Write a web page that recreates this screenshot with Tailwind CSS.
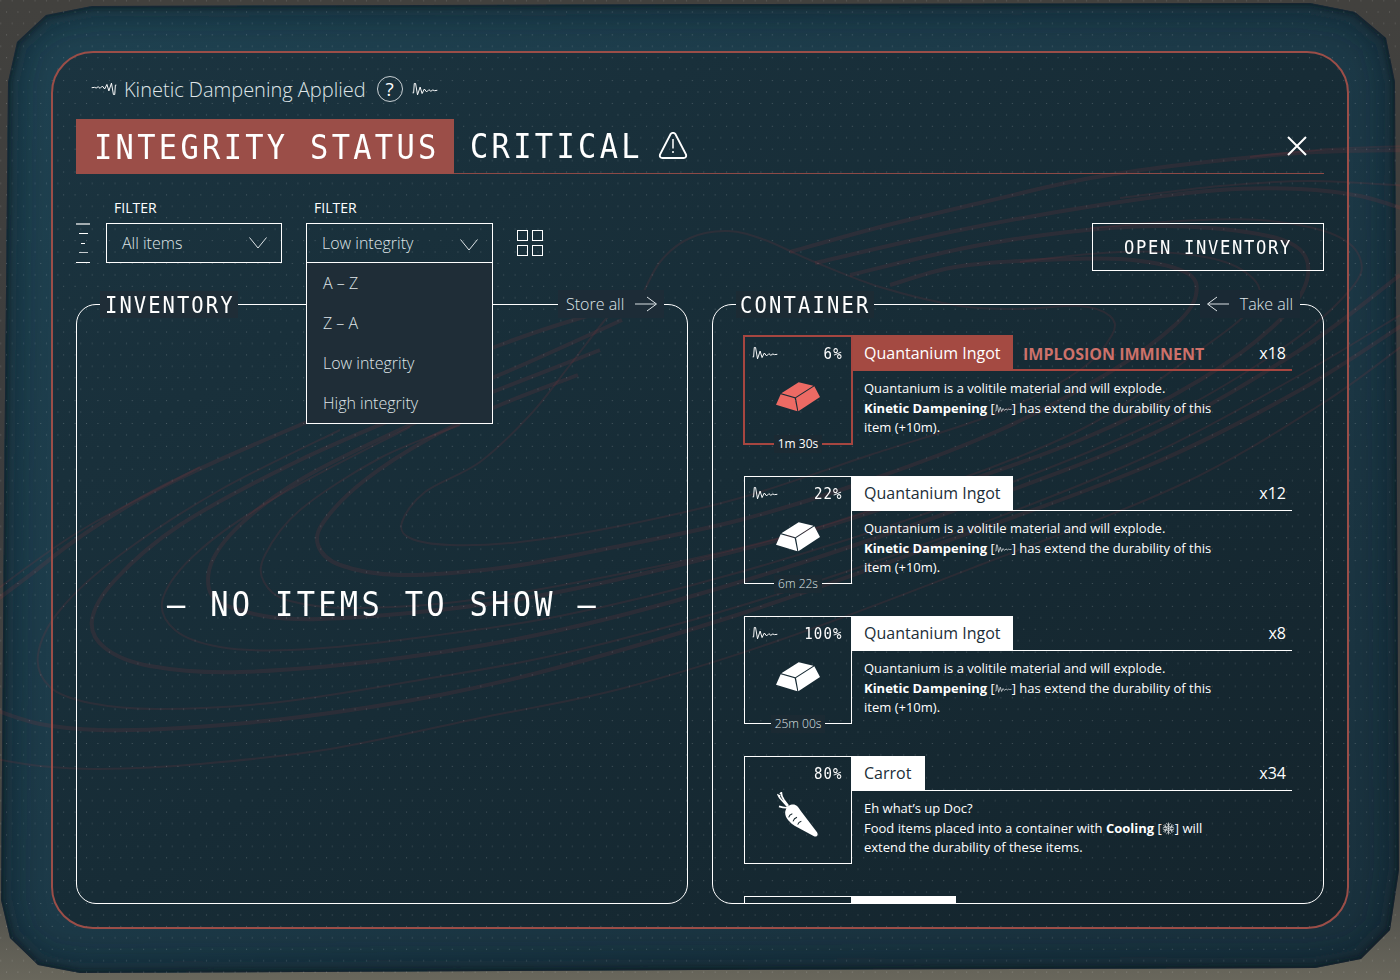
<!DOCTYPE html>
<html lang="en">
<head>
<meta charset="utf-8">
<title>Inventory</title>
<script src="https://cdn.jsdelivr.net/npm/@tailwindcss/browser@4"></script>
</head>
<body class="relative w-[1400px] h-[980px] overflow-hidden bg-[#3f3f3c] text-white font-['Open_Sans','Noto_Sans',sans-serif]">

<!-- icon library -->
<svg class="hidden">
  <symbol id="wave" viewBox="66 62 80 42"><path d="M68 95L71 95L73 66L77 66L83 101L91 77L97 97L104 83L111 92L118 85L124 90L130 86L135 88L144 87" fill="none" stroke="currentColor" stroke-width="3" stroke-linejoin="round"/></symbol>
  <symbol id="ingot" viewBox="138 170 134 90"><path d="M154 204L206 171L250 181L196 216ZM152 207L194 219L202 258L138 238ZM198 218L253 183L270 215L205 258Z" fill="currentColor"/></symbol>
  <symbol id="carrot" viewBox="140 155 125 137"><path d="M167 207C170 197 184 190 195 194C203 197 206 204 212 213L260 276C265 284 259 291 251 288L194 257C178 247 161 230 165 212Z" fill="currentColor"/><path d="M172 199L154 179Q146 171 144 165L150 168M174 196L161 179Q153 168 153 157L149 161M172 202Q160 203 146 198" fill="none" stroke="currentColor" stroke-width="5"/><path d="M175 231q2-8 11-11M188 243q3-9 12-12M202 253q3-8 11-10" fill="none" stroke="#16282f" stroke-width="3"/></symbol>
  <symbol id="snow" viewBox="0 0 24 24"><path d="M12 1v22M2.500 6.500l19 11M21.500 6.500l-19 11M8 2l4 4 4-4M8 22l4-4 4 4M1.500 11l5.500-1.500-1.500-5.500M22.500 11L17 9.500 18.500 4M1.500 13L7 14.500 5.500 20M22.500 13L17 14.500l1.500 5.500M12 7l4.300 2.500v5L12 17l-4.300-2.500v-5z" fill="none" stroke="currentColor" stroke-width="1.200"/></symbol>
  <symbol id="arrow" viewBox="0 0 23 16"><path d="M0 8H21" stroke="currentColor" stroke-width="1.500" opacity=".65"/><path d="M12 1L21.500 8L12 15" fill="none" stroke="currentColor" stroke-width="1"/></symbol>
  <symbol id="chev" viewBox="0 0 18 12"><path d="M.5 .5L9 11L17.500 .5" fill="none" stroke="currentColor" stroke-width="1"/></symbol>
</svg>

<!-- backdrop -->
<svg class="absolute inset-0" width="1400" height="980" viewBox="0 0 1400 980">
  <defs>
    <linearGradient id="metal" x1="0" y1="0" x2="0" y2="1"><stop offset="0" stop-color="#42413e"/><stop offset=".5" stop-color="#3c3d3e"/><stop offset=".9" stop-color="#4b4b47"/><stop offset="1" stop-color="#69675c"/></linearGradient>
    <linearGradient id="screen" x1="0" y1="0" x2="1" y2="1"><stop offset="0" stop-color="#1f4251"/><stop offset=".5" stop-color="#1c3947"/><stop offset="1" stop-color="#19303c"/></linearGradient>
    <linearGradient id="inner" x1="0" y1="0" x2="1" y2="1"><stop offset="0" stop-color="#1b3440"/><stop offset=".5" stop-color="#172c36"/><stop offset="1" stop-color="#14242c"/></linearGradient>
    <pattern id="dots" width="11.430" height="22.860" patternUnits="userSpaceOnUse" x="6" y="11.500"><rect width="1" height="1" fill="#fff" opacity=".2"/><rect x="5.700" y="11.430" width="1" height="1" fill="#fff" opacity=".2"/></pattern>
    <filter id="soft" x="-5%" y="-5%" width="110%" height="110%"><feGaussianBlur stdDeviation="14"/></filter>
    <filter id="edge" x="-5%" y="-5%" width="110%" height="110%"><feGaussianBlur stdDeviation="2.500"/></filter>
    <path id="shape" d="M8 82L17 42L46 15L92 6L700 4L1310 3L1355 12L1386 38L1395 82L1397 500L1399 870L1390 930L1361 959L1315 968L700 970L80 973L38 965L10 938L1 900L4 500Z"/>
    <clipPath id="cut"><use href="#shape"/></clipPath>
  </defs>
  <rect width="1400" height="980" fill="url(#metal)"/>
  <use href="#shape" fill="url(#screen)"/>
  <g clip-path="url(#cut)"><use href="#shape" fill="none" stroke="#101f28" stroke-width="24" opacity=".5" filter="url(#soft)"/><use href="#shape" fill="none" stroke="#0c171d" stroke-width="4" opacity=".7" filter="url(#edge)"/></g>
  <rect x="52" y="52" width="1296" height="876" rx="41" fill="url(#inner)"/>
  <g id="rings" fill="none" stroke="#a83c42" stroke-opacity=".14"></g>
  <rect width="1400" height="980" fill="url(#dots)"/>
</svg>

<main class="relative m-[51px] w-[1298px] h-[878px] border-2 border-[#9b4e48] rounded-[42px] px-[23px] pt-[23px] flex flex-col">
  <div class="flex items-center h-[26px] pl-[15px] text-[20px] font-light">
    <svg class="w-[26px] h-[16px] rotate-180"><use href="#wave"/></svg>
    <span class="relative top-px ml-[7px] whitespace-nowrap text-[#dfe5e8]">Kinetic Dampening Applied</span>
    <span class="ml-[11px] size-[26px] rounded-full border border-[#c9d0d4] flex items-center justify-center text-[19px] font-normal">?</span>
    <svg class="ml-[9px] w-[26px] h-[16px]"><use href="#wave"/></svg>
  </div>

  <header class="mt-[17px] h-[55px] flex items-center border-b border-[#8d4a46] font-['DejaVu_Sans_Mono',monospace] text-[34.500px] tracking-[3.780px]">
    <h1 class="w-[378px] h-[55px] pl-[17.500px] bg-[#9b4e48] leading-[57px] whitespace-nowrap"><span class="inline-block origin-left scale-x-[.88] w-[340px]">INTEGRITY STATUS</span></h1>
    <span class="ml-[16px] mt-px w-[173px] leading-[57px] origin-left scale-x-[.88]">CRITICAL</span>
    <svg class="ml-[15px] w-[30px] h-[28px]" viewBox="0 0 30 28" fill="none" stroke="currentColor"><path d="M12.500 2.200Q15 -.5 17.500 2.200L28 22.500Q28.800 25.800 25.500 26H4.500Q1.200 25.800 2 22.500Z" stroke-width="1.900"/><path d="M15 7V16.500M15 19v2" stroke-width="1.500"/></svg>
    <svg class="ml-auto mr-[16px] w-[21px] h-[21px]" viewBox="0 0 21 21"><path d="M1 1L19 19M19 1L1 19" stroke="currentColor" stroke-width="2"/></svg>
  </header>

  <div class="relative z-10 mt-[24px] h-[73px] flex">
    <div class="mt-[25px] w-[14px] h-[40px] flex flex-col items-center justify-between">
      <i class="h-[1.500px] w-[14px] bg-white/60"></i><i class="h-px w-[9px] bg-white"></i><i class="h-px w-[4px] bg-white"></i><i class="h-px w-[9px] bg-white/75"></i><i class="h-px w-[14px] bg-white"></i>
    </div>
    <div class="ml-[16px] w-[176px]">
      <div class="h-[25px] pl-[8px] text-[14px] leading-[20px]">FILTER</div>
      <div class="h-[40px] border border-white pl-[15px] pr-[14px] flex items-center justify-between text-[16px] font-light text-[#dfe5e8]"><span>All items</span><svg class="w-[18px] h-[12px]"><use href="#chev"/></svg></div>
    </div>
    <div class="ml-[24px] w-[187px]">
      <div class="h-[25px] pl-[8px] text-[14px] leading-[20px]">FILTER</div>
      <div class="relative h-[40px] border border-white pl-[15px] pr-[14px] flex items-center justify-between text-[16px] font-light text-[#dfe5e8]"><span>Low integrity</span><svg class="mt-[3px] w-[18px] h-[12px]"><use href="#chev"/></svg>
        <ul class="absolute -left-px top-[38px] w-[187px] h-[162px] border border-white bg-[#1f2d37] pl-[16px] leading-[40px]"><li>A – Z</li><li>Z – A</li><li>Low integrity</li><li>High integrity</li></ul>
      </div>
    </div>
    <div class="ml-[24px] mt-[32px] size-[26px] grid grid-cols-2 gap-[4px]"><i class="border border-white"></i><i class="border border-white"></i><i class="border border-white"></i><i class="border border-white"></i></div>
    <button class="ml-auto mt-[25px] w-[232px] h-[48px] border border-white pl-[30.500px] pt-[2px] text-left font-['DejaVu_Sans_Mono',monospace] text-[19.500px] tracking-[1.900px] whitespace-nowrap"><span class="block w-[168px] origin-left scale-x-[.88]">OPEN INVENTORY</span></button>
  </div>

  <div class="mt-[33px] flex gap-[24px]">
    <section class="relative w-[612px] h-[600px] border border-white rounded-[20px] flex items-center justify-center">
      <h2 class="absolute left-[23px] -top-[14px] h-[27px] w-[138px] bg-[#1f2d37] pl-[5px] font-['DejaVu_Sans_Mono',monospace] text-[23.300px] leading-[27px] tracking-[2.330px]"><span class="block w-[130px] origin-left scale-x-[.88]">INVENTORY</span></h2>
      <div class="absolute right-[23px] -top-[15px] h-[28px] w-[106px] bg-[#1d2c37] pl-[8px] pr-[6px] flex items-center justify-between text-[16px] font-light text-[#dfe5e8]">Store all<svg class="w-[23px] h-[16px]"><use href="#arrow"/></svg></div>
      <p class="w-[430px] pt-[2px] font-['DejaVu_Sans_Mono',monospace] text-[34.500px] tracking-[3.780px] whitespace-nowrap origin-left scale-x-[.88]">– NO ITEMS TO SHOW –</p>
    </section>
    <section class="relative w-[612px] h-[600px] border border-white rounded-[20px]">
      <h2 class="absolute left-[23px] -top-[14px] h-[27px] w-[138px] bg-[#1c2b34] pl-[4px] font-['DejaVu_Sans_Mono',monospace] text-[23.300px] leading-[27px] tracking-[2.450px]"><span class="block w-[130px] origin-left scale-x-[.88]">CONTAINER</span></h2>
      <div class="absolute right-[23px] -top-[15px] h-[28px] w-[100px] bg-[#1a2934] pl-[6px] pr-[7px] flex items-center justify-between text-[16px] font-light text-[#dfe5e8]"><svg class="w-[23px] h-[16px] -scale-x-100"><use href="#arrow"/></svg>Take all</div>
      <div id="items" class="h-[598px] overflow-hidden px-[31px] pt-[31px] flex flex-col gap-[32px]"></div>
    </section>
  </div>
</main>

<script>
// Contour rings: stroke width followed by the points each one passes through
const rings = [
 [2,[[640,300],[660,262],[690,238],[728,231],[765,240],[810,260],[880,287],[960,306],[1020,309],[1080,306],[1110,316],[1112,335],[1080,370],[1000,412],[870,455],[740,498],[620,526],[520,542],[450,545],[410,538],[402,522],[425,492],[480,462],[530,415],[570,365],[605,320],[625,300]]],
 [4,[[578,375],[500,405],[430,438],[365,480],[325,520],[318,545],[340,565],[400,575],[500,568],[600,550],[740,520],[870,480],[1000,430],[1110,372],[1175,325],[1196,295],[1185,272],[1120,259],[1020,261],[950,268],[890,285]]],
 [2,[[460,425],[380,458],[300,510],[265,555],[264,582],[290,601],[360,608],[500,596],[740,548],[900,500],[1080,430],[1200,350],[1250,310],[1258,285],[1225,262],[1160,252],[1090,254],[1020,262]]],
 [4,[[600,350],[490,393],[410,425],[300,480],[230,535],[208,580],[230,607],[320,619],[520,599],[740,550],[900,503],[1080,440],[1200,380],[1280,320],[1308,275],[1290,243],[1210,228],[1110,228],[980,245],[850,275]]],
 [2,[[410,427],[280,495],[200,550],[163,598],[175,630],[220,647],[290,650],[400,640],[560,616],[740,572],[950,505],[1150,425],[1280,350],[1350,290],[1360,258],[1330,233],[1260,220],[1180,221],[1090,228]]],
 [4,[[622,320],[520,366],[420,408],[300,460],[180,525],[115,580],[92,620],[105,648],[150,666],[240,672],[400,658],[560,630],[740,582],[950,512],[1150,435],[1300,350],[1400,275]]],
 [4,[[815,263],[960,230],[1100,205],[1220,190],[1300,189],[1360,196],[1410,211]]],
 [2,[[340,430],[220,490],[120,555],[60,610],[38,655],[50,687],[90,703],[160,709],[280,702],[420,680],[560,654],[740,606],[950,535],[1150,455],[1300,375],[1400,315]]],
 [2,[[1120,198],[1220,186],[1310,181],[1410,186]]],
 [4,[[590,315],[500,345],[300,425],[160,488],[80,537],[30,575],[-10,605]]],
 [2,[[200,467],[90,525],[30,565],[-10,595]]],
 [4,[[-10,708],[40,724],[100,730],[180,728],[300,717],[440,695],[560,667],[740,614],[950,540],[1150,465],[1300,390],[1410,320]]],
 [4,[[790,252],[880,227],[980,203],[1080,180],[1180,165],[1300,153],[1410,150]]],
 [2,[[1250,157],[1330,149],[1410,146]]],
 [2,[[-10,758],[40,766],[100,769],[200,764],[330,749],[480,718],[620,689],[780,640],[980,565],[1180,485],[1320,405],[1410,340]]]
];
// Catmull-Rom smoothing into cubic segments
document.getElementById('rings').innerHTML = rings.map(([w, p]) => {
  let d = 'M' + p[0];
  for (let i = 0; i < p.length - 1; i++) {
    const a = p[i - 1] || p[i], b = p[i], c = p[i + 1], e = p[i + 2] || c;
    d += 'C' + [b[0] + (c[0] - a[0]) / 6, b[1] + (c[1] - a[1]) / 6, c[0] - (e[0] - b[0]) / 6, c[1] - (e[1] - b[1]) / 6, c[0], c[1]];
  }
  return `<path d="${d}" stroke-width="${w}"/>`;
}).join('');

const wave = '<svg class="w-[26px] h-[14px]"><use href="#wave"/></svg>';
const quant = 'Quantanium is a volitile material and will explode.<br><b>Kinetic Dampening</b> [<svg class="inline w-[17px] h-[9px] -mt-[2px]"><use href="#wave"/></svg>] has extend the durability of this<br>item (+10m).';
const carrot = 'Eh what’s up Doc?<br>Food items placed into a container with <b>Cooling</b> [<svg class="inline w-[13px] h-[13px] -mt-[2px]"><use href="#snow"/></svg>] will<br>extend the durability of these items.';
const icons = {
  ingot: '<svg class="absolute left-[31px] top-[45px] w-[44.700px] h-[30px]"><use href="#ingot"/></svg>',
  carrot: '<svg class="absolute left-[31.700px] top-[34.700px] w-[41.700px] h-[45.700px]"><use href="#carrot"/></svg>'
};
const items = [
  {pct:'6%', name:'Quantanium Ingot', w:161, n:'x18', time:'1m 30s', gap:48, icon:'ingot', text:quant, hot:true},
  {pct:'22%', name:'Quantanium Ingot', w:161, n:'x12', time:'6m 22s', gap:48, icon:'ingot', text:quant},
  {pct:'100%', name:'Quantanium Ingot', w:161, n:'x8', time:'25m 00s', gap:54, icon:'ingot', text:quant},
  {pct:'80%', name:'Carrot', w:73, n:'x34', icon:'carrot', text:carrot},
  {pct:'', name:'', w:104, n:'', text:''}
];
document.getElementById('items').innerHTML = items.map(i => `
  <article class="shrink-0 h-[108px] flex">
    <div class="relative shrink-0 size-[108px] border ${i.hot ? 'border-transparent outline-2 -outline-offset-1 outline-[#a64640]' : 'border-white'}">
      <div class="absolute left-[7px] right-[8px] top-[7px] h-[18px] flex items-center justify-between">${i.time ? wave : '<i></i>'}<span class="relative top-px origin-right scale-x-[.88] font-['DejaVu_Sans_Mono',monospace] text-[16px] leading-[20px] tracking-[1.270px]">${i.pct}</span></div>
      <div class="${i.hot ? 'text-[#ec6a64]' : 'text-white'}">${icons[i.icon] || ''}</div>
      ${i.time ? `<div class="absolute inset-x-0 -bottom-[10px] flex justify-center"><span class="h-[18px] bg-[#1b2a33] text-center text-[12px] leading-[18px] ${i.hot ? '' : 'font-light text-[#dfe5e8]'}" style="width:${i.gap}px">${i.time}</span></div>` : ''}
    </div>
    <div class="flex-1 min-w-0">
      <div class="flex items-start leading-[34px] h-[35px] ${i.hot ? 'shadow-[inset_0_-2px_0_#a64640]' : 'border-b border-white'}">
        <h3 class="pl-[12px] text-[16px] whitespace-nowrap ${i.hot ? '-mt-px h-[36px] leading-[36px] bg-[#a44a42]' : 'h-[35px] bg-white text-[#1b2e38]'}" style="width:${i.w}px">${i.name}</h3>
        ${i.hot ? '<strong class="ml-[10px] mt-px text-[16px] font-bold text-[#cd716a]">IMPLOSION IMMINENT</strong>' : ''}
        <span class="ml-auto mr-[6px] text-[16px]">${i.n}</span>
      </div>
      <p class="pl-[12px] pt-[8px] text-[13px] leading-[19.500px] whitespace-nowrap">${i.text}</p>
    </div>
  </article>`).join('');
</script>
</body>
</html>
